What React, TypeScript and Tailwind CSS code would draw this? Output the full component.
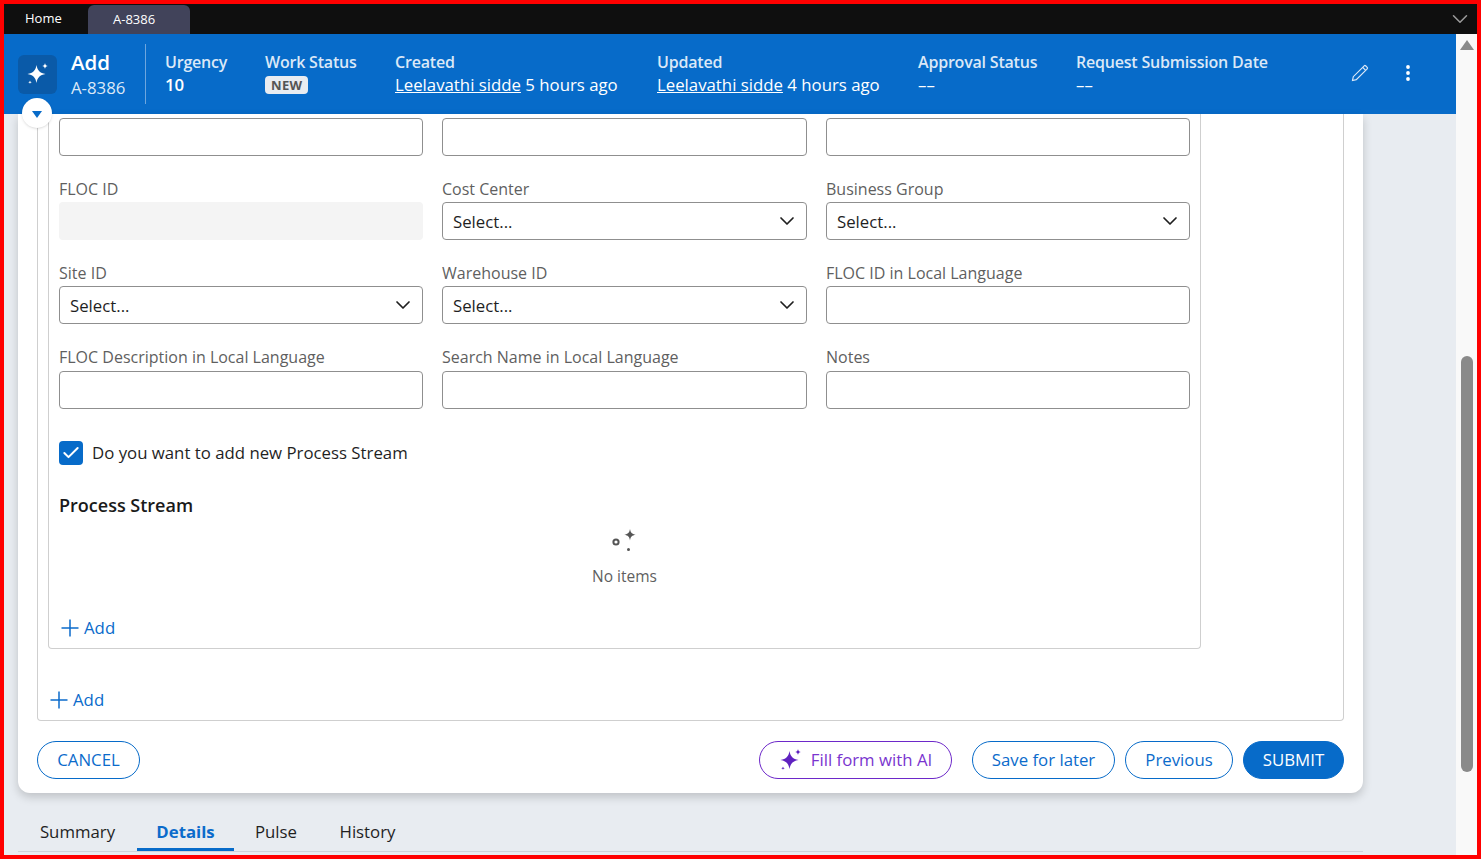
import { Check, ChevronDown } from "lucide-react";

const font = { fontFamily: '"Open Sans", "Noto Sans", sans-serif' };

function Sparkle({ className }: { className?: string }) {
  return (
    <svg viewBox="0 0 24 24" className={className} fill="currentColor">
      <path d="M10.500 3c1 5.600 3.400 8 9 9-5.600 1-8 3.400-9 9-1-5.600-3.400-8-9-9 5.600-1 8-3.400 9-9Z" />
      <path d="M19 1c.3 1.900 1.100 2.700 3 3-1.900.3-2.700 1.100-3 3-.3-1.900-1.100-2.700-3-3 1.900-.3 2.700-1.100 3-3Z" />
      <path d="M4 18.500c.2 1.100.7 1.600 1.800 1.800-1.100.2-1.600.7-1.800 1.800-.2-1.100-.7-1.600-1.800-1.800 1.100-.2 1.600-.7 1.800-1.800Z" />
    </svg>
  );
}

function Meta({ label, width, children }: { label: string; width: string; children: React.ReactNode }) {
  return (
    <div className={`${width} mt-[2px] shrink-0`}>
      <div className="text-[16px] leading-[22px] font-semibold tracking-[-0.2px] text-[#dbe8f7]">{label}</div>
      <div className="mt-px flex h-[22px] items-center text-[16.800px] leading-[22px] text-white">{children}</div>
    </div>
  );
}

function Who({ ago }: { ago: string }) {
  return (
    <span className="whitespace-nowrap">
      <span className="underline">Leelavathi sidde</span> {ago}
    </span>
  );
}

function Field({ label, select, disabled }: { label?: string; select?: boolean; disabled?: boolean }) {
  return (
    <div>
      {label && <div className="mb-[2.330px] h-[22px] text-[16px] leading-[22px] text-[#5f5f5f]">{label}</div>}
      {disabled ? (
        <div className="h-[38px] rounded bg-[#f4f4f4]" />
      ) : (
        <div className="flex h-[38px] items-center justify-between rounded border border-[#8f8f8f] bg-white pr-[7px] pl-[10px] text-[16.800px] text-[#1f1f1f]">
          {select && <span>Select...</span>}
          {select && <ChevronDown size={24} strokeWidth={1.7} className="text-[#1f1f1f]" />}
        </div>
      )}
    </div>
  );
}

function AddLink() {
  return (
    <div className="flex items-center gap-[5px] text-[16.800px] leading-6 text-[#0b6bcb]">
      <svg viewBox="0 0 18 18" className="size-[18px]" fill="none" stroke="currentColor" strokeWidth="1.500">
        <path d="M9 0.500v17M0.500 9h17" />
      </svg>
      Add
    </div>
  );
}

function Pill({ children, className }: { children: React.ReactNode; className?: string }) {
  return (
    <div className={`flex h-[38px] items-center justify-center rounded-full border pb-[2px] text-[16.800px] ${className ?? ""}`}>
      {children}
    </div>
  );
}

export default function App() {
  return (
    <div style={font} className="flex h-[859px] w-[1481px] flex-col overflow-hidden border-4 border-[#ff0000] bg-[#e8ecf1]">
      {/* tab strip */}
      <div className="flex h-[30px] shrink-0 items-end bg-[#0f0f0f]">
        <div className="flex h-[30px] w-[84px] items-center pl-[21px] text-[13px] text-white">Home</div>
        <div className="flex h-[29px] w-[102px] items-center rounded-t-md bg-[#41435a] pl-[25px] text-[13px] text-white">A-8386</div>
        <ChevronDown size={26} strokeWidth={1.4} className="mb-[2px] ml-auto mr-[4px] text-[#9a9a9a]" />
      </div>

      <div className="flex min-h-0 flex-1">
        <div className="relative flex w-[1452px] shrink-0 flex-col">
          {/* case header */}
          <div className="flex h-[80px] shrink-0 items-center bg-[#076bc9] pb-[3px] pl-[14px]">
            <div className="mt-[3px] grid size-[39px] shrink-0 place-items-center rounded-md bg-[#0a5aa8] text-white">
              <Sparkle className="size-[24px]" />
            </div>
            <div className="mt-[2px] ml-[14px] w-[74px] shrink-0 text-white">
              <div className="text-[20.500px] leading-[26px] font-semibold">Add</div>
              <div className="mt-[2px] text-[16.800px] leading-[22px] text-[#dbe8f7]">A-8386</div>
            </div>
            <div className="mt-[3px] mr-[19px] h-[60px] w-px shrink-0 bg-[#6ea6de]" />
            <Meta label="Urgency" width="w-[100px]">
              <span className="font-semibold">10</span>
            </Meta>
            <Meta label="Work Status" width="w-[130px]">
              <span className="block w-fit rounded-sm bg-[#e8ecf1] px-[6px] text-[13px] leading-[18px] font-bold tracking-wide text-[#555]">NEW</span>
            </Meta>
            <Meta label="Created" width="w-[262px]">
              <Who ago="5 hours ago" />
            </Meta>
            <Meta label="Updated" width="w-[261px]">
              <Who ago="4 hours ago" />
            </Meta>
            <Meta label="Approval Status" width="w-[158px]">––</Meta>
            <Meta label="Request Submission Date" width="w-[270px]">––</Meta>
            <svg viewBox="0 0 20 20" className="mt-[1px] ml-[4px] size-[20px] shrink-0 text-[#dbe8f7]" fill="none" stroke="currentColor" strokeWidth="1.200">
              <path d="M2.500 17.500l.8-3.800L14.200 2.800a1 1 0 0 1 1.400 0l1.600 1.600a1 1 0 0 1 0 1.400L6.300 16.700l-3.800.8Z" />
              <path d="M12.700 4.300l3 3" />
            </svg>
            <svg viewBox="0 0 4 16" className="mt-[1px] ml-[36px] h-[16px] w-[4px] shrink-0 text-white" fill="currentColor">
              <circle cx="2" cy="2" r="1.900" />
              <circle cx="2" cy="8" r="1.900" />
              <circle cx="2" cy="14" r="1.900" />
            </svg>
          </div>

          {/* collapse toggle sits over the header edge */}
          <div className="absolute top-[64px] left-[18px] grid size-[30px] place-items-center rounded-full bg-white shadow-sm">
            <div className="mt-[2px] h-0 w-0 border-x-[5px] border-t-[7px] border-x-transparent border-t-[#076bc9]" />
          </div>

          {/* scrolled body */}
          <div className="min-h-0 flex-1 pl-[14px]">
            <div className="w-[1345px] rounded-b-xl bg-white px-[19px] pb-[14px] shadow-[0_4px_10px_rgba(0,0,0,0.18)]">
              <div className="rounded-b border-x border-b border-[#cfcfcf] px-[10px]">
                <div className="w-[1153px] rounded-b border-x border-b border-[#cfcfcf] px-[10px] pt-[4px] pb-[8px]">
                  <div className="grid grid-cols-[364px_365px_364px] gap-x-[19px] gap-y-[21.900px]">
                    <Field />
                    <Field />
                    <Field />
                    <Field label="FLOC ID" disabled />
                    <Field label="Cost Center" select />
                    <Field label="Business Group" select />
                    <Field label="Site ID" select />
                    <Field label="Warehouse ID" select />
                    <Field label="FLOC ID in Local Language" />
                    <Field label="FLOC Description in Local Language" />
                    <Field label="Search Name in Local Language" />
                    <Field label="Notes" />
                  </div>

                  <div className="mt-[31.500px] flex items-center gap-[9px]">
                    <div className="grid size-[24px] place-items-center rounded bg-[#076bc9] text-white">
                      <Check size={20} strokeWidth={2.4} />
                    </div>
                    <span className="text-[16.800px] text-[#1f1f1f]">Do you want to add new Process Stream</span>
                  </div>

                  <div className="mt-[28px] text-[18px] leading-6 font-semibold text-[#1a1a1a]">Process Stream</div>

                  <div className="mt-[12px] flex flex-col items-center">
                    <svg viewBox="0 0 26 24" className="h-[24px] w-[26px] text-[#555]" fill="currentColor">
                      <circle cx="4" cy="13" r="2.600" fill="none" stroke="currentColor" strokeWidth="2" />
                      <path d="M18 0c.7 3.900 1.800 5 5.700 5.700C19.800 6.400 18.700 7.500 18 11.400c-.7-3.900-1.800-5-5.700-5.700C16.200 5 17.300 3.900 18 0Z" />
                      <circle cx="16.500" cy="20.500" r="1.500" />
                    </svg>
                    <div className="mt-[12px] text-[15.500px] leading-[22px] text-[#5f5f5f]">No items</div>
                  </div>

                  <div className="mt-[29px] ml-[2px]">
                    <AddLink />
                  </div>
                </div>

                <div className="mt-[39px] mb-[8px] ml-[2px]">
                  <AddLink />
                </div>
              </div>

              <div className="mt-[20px] flex items-center">
                <Pill className="w-[103px] border-[#076bc9] text-[#0b6bcb]">CANCEL</Pill>
                <Pill className="ml-auto w-[193px] gap-[8px] border-[#6d28c9] text-[#7a35cf]">
                  <Sparkle className="mt-[2px] size-[24px] text-[#5f22c0]" />
                  Fill form with AI
                </Pill>
                <Pill className="ml-[20px] w-[143px] border-[#076bc9] text-[#0b6bcb]">Save for later</Pill>
                <Pill className="ml-[10px] w-[108px] border-[#076bc9] text-[#0b6bcb]">Previous</Pill>
                <Pill className="ml-[10px] w-[101px] border-[#076bc9] bg-[#076bc9] font-medium text-white">SUBMIT</Pill>
              </div>
            </div>

            {/* tabs */}
            <div className="mt-[27px] flex w-[1345px] border-b border-[#cfd3d8] text-[16.800px] text-[#1f1f1f]">
              <div className="w-[119px] pb-[7px] text-center leading-6">Summary</div>
              <div className="w-[97px] border-b-[3px] border-[#076bc9] pb-[4px] text-center leading-6 font-bold text-[#0b6bcb]">Details</div>
              <div className="w-[84px] text-center leading-6">Pulse</div>
              <div className="w-[99px] text-center leading-6">History</div>
            </div>
          </div>
        </div>

        {/* page scrollbar */}
        <div className="relative flex w-[21px] shrink-0 flex-col items-center bg-[#f9f9f9]">
          <div className="mt-[6px] h-0 w-0 border-x-[7px] border-b-[10px] border-x-transparent border-b-[#8a8a8a]" />
          <div className="mt-[306px] h-[416px] w-[12px] rounded-full bg-[#8a8a8a]" />
        </div>
      </div>
    </div>
  );
}
